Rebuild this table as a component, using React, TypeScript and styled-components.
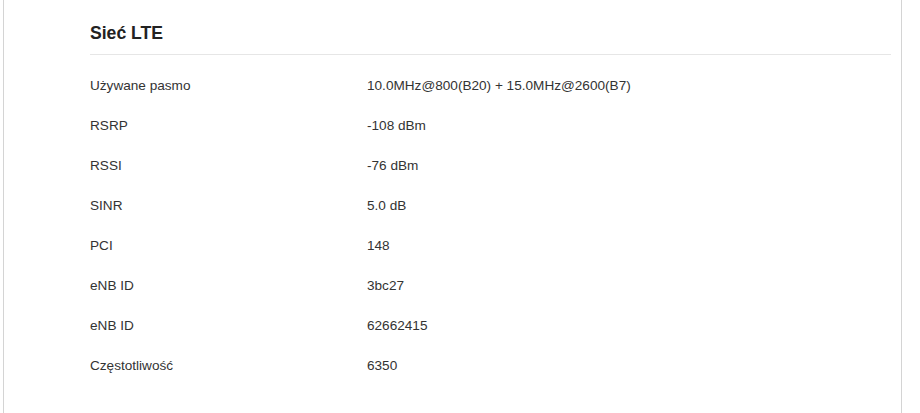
import styled, { createGlobalStyle } from 'styled-components'

const GlobalStyle = createGlobalStyle`
  *, *::before, *::after {
    box-sizing: border-box;
  }
  html, body {
    margin: 0;
    padding: 0;
    background: #fff;
    overflow: hidden;
  }
  body {
    font-family: "Liberation Sans", Arial, Helvetica, sans-serif;
    color: #333;
  }
`

const Card = styled.section`
  margin-left: 3px;
  width: 899px;
  height: 413px;
  border-left: 1px solid #d4d4d4;
  border-right: 1px solid #d4d4d4;
  padding: 21px 10px 0 86px;
`

const Header = styled.h2`
  margin: 0;
  padding-bottom: 9px;
  border-bottom: 1px solid #e6e6e6;
  font-size: 17.6px;
  line-height: 24px;
  font-weight: 700;
  color: #222;
`

const List = styled.dl`
  margin: 11px 0 0;
`

const Row = styled.div`
  display: grid;
  grid-template-columns: 277px 1fr;
  height: 40px;
  line-height: 40px;
  font-size: 13.6px;
  color: #333;
`

const Label = styled.dt`
  margin: 0;
`

const Value = styled.dd`
  margin: 0;
`

const rows: [string, string][] = [
  ['Używane pasmo', '10.0MHz@800(B20) + 15.0MHz@2600(B7)'],
  ['RSRP', '-108 dBm'],
  ['RSSI', '-76 dBm'],
  ['SINR', '5.0 dB'],
  ['PCI', '148'],
  ['eNB ID', '3bc27'],
  ['eNB ID', '62662415'],
  ['Częstotliwość', '6350'],
]

export default function App() {
  return (
    <>
      <GlobalStyle />
      <Card>
        <Header>Sieć LTE</Header>
        <List>
          {rows.map(([label, value], i) => (
            <Row key={i}>
              <Label>{label}</Label>
              <Value>{value}</Value>
            </Row>
          ))}
        </List>
      </Card>
    </>
  )
}
